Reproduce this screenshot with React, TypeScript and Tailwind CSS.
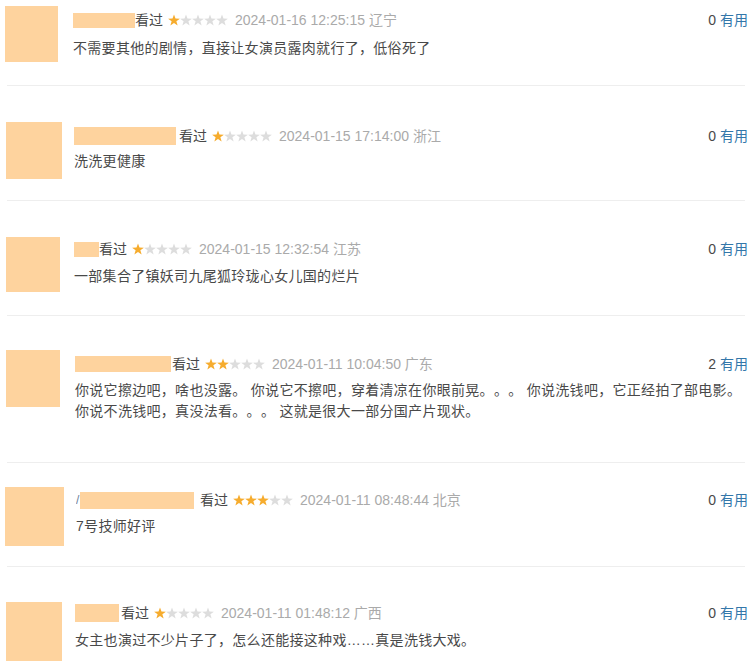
import React from 'react';

type Review = {
  wrap: string;
  avatar: string;
  body: string;
  bar: string;
  meta: string;
  comment: string;
  sep: string;
  lead?: boolean;
  stars: number;
  time: string;
  votes: number;
  text: string[];
};

const reviews: Review[] = [
  {
    wrap: 'pt-[6px] pl-[5px]',
    avatar: 'w-[53px] h-[56px]',
    body: 'ml-[15px]',
    bar: 'w-[62px] h-[15px] mr-0',
    meta: 'mt-[4px]',
    comment: 'mt-[8px]',
    sep: 'mt-[23px]',
    stars: 1,
    time: '2024-01-16 12:25:15 辽宁',
    votes: 0,
    text: ['不需要其他的剧情，直接让女演员露肉就行了，低俗死了'],
  },
  {
    wrap: 'pt-[36px] pl-[6px]',
    avatar: 'w-[56px] h-[57px]',
    body: 'ml-[12px]',
    bar: 'w-[102px] h-[18px] mr-[3px]',
    meta: 'mt-[4px]',
    comment: 'mt-[5px]',
    sep: 'mt-[21px]',
    stars: 1,
    time: '2024-01-15 17:14:00 浙江',
    votes: 0,
    text: ['洗洗更健康'],
  },
  {
    wrap: 'pt-[36px] pl-[6px]',
    avatar: 'w-[54px] h-[55px]',
    body: 'ml-[14px]',
    bar: 'w-[25px] h-[15px] mr-0',
    meta: 'mt-[2px]',
    comment: 'mt-[7px]',
    sep: 'mt-[23px]',
    stars: 1,
    time: '2024-01-15 12:32:54 江苏',
    votes: 0,
    text: ['一部集合了镇妖司九尾狐玲珑心女儿国的烂片'],
  },
  {
    wrap: 'pt-[34px] pl-[6px]',
    avatar: 'w-[54px] h-[57px]',
    body: 'ml-[15px]',
    bar: 'w-[96px] h-[16px] mr-[1px]',
    meta: 'mt-[4px]',
    comment: 'mt-[6px]',
    sep: 'mt-[40px]',
    stars: 2,
    time: '2024-01-11 10:04:50 广东',
    votes: 2,
    text: [
      '你说它擦边吧，啥也没露。 你说它不擦吧，穿着清凉在你眼前晃。。。 你说洗钱吧，它正经拍了部电影。',
      '你说不洗钱吧，真没法看。。。 这就是很大一部分国产片现状。',
    ],
  },
  {
    wrap: 'pt-[24px] pl-[5px]',
    avatar: 'w-[59px] h-[59px]',
    body: 'ml-[12px]',
    bar: 'w-[114px] h-[17px] mr-[6px]',
    meta: 'mt-[3px]',
    comment: 'mt-[6px]',
    sep: 'mt-[20px]',
    lead: true,
    stars: 3,
    time: '2024-01-11 08:48:44 北京',
    votes: 0,
    text: ['7号技师好评'],
  },
  {
    wrap: 'pt-[35px] pl-[6px]',
    avatar: 'w-[56px] h-[59px]',
    body: 'ml-[13px]',
    bar: 'w-[44px] h-[18px] mr-[2px]',
    meta: 'mt-[1px]',
    comment: 'mt-[7px]',
    sep: 'mt-[20px]',
    stars: 1,
    time: '2024-01-11 01:48:12 广西',
    votes: 0,
    text: ['女主也演过不少片子了，怎么还能接这种戏……真是洗钱大戏。'],
  },
];

const STAR =
  'M6 0.4 L7.47 4.58 L11.9 4.68 L8.38 7.37 L9.64 11.62 L6 9.1 L2.36 11.62 L3.62 7.37 L0.1 4.68 L4.53 4.58 Z';

function Stars({ n }: { n: number }) {
  return (
    <svg width="60" height="12" viewBox="0 0 60 12" className="shrink-0 block">
      {[0, 1, 2, 3, 4].map((i) => (
        <path
          key={i}
          d={STAR}
          transform={`translate(${i * 12} 0)`}
          fill={i < n ? '#f6ac2e' : '#dddddd'}
        />
      ))}
    </svg>
  );
}

function Item({ r, last }: { r: Review; last: boolean }) {
  return (
    <>
      <div className={`flex pr-[4px] ${r.wrap}`}>
        <div className={`shrink-0 bg-[#fed39e] ${r.avatar}`} />
        <div className={`flex-1 min-w-0 ${r.body}`}>
          <div className={`flex items-center h-[20px] text-[14px] ${r.meta}`}>
            {r.lead && (
              <span className="w-[4px] overflow-hidden text-[12px] text-[#6d7f9c] leading-none">/</span>
            )}
            <span className={`shrink-0 bg-[#fed39e] ${r.bar}`} />
            <span className="text-[#494949]">看过</span>
            <span className="ml-[5px]">
              <Stars n={r.stars} />
            </span>
            <span className="ml-[7px] text-[#aaaaaa]">{r.time}</span>
            <span className="ml-auto whitespace-nowrap">
              <span className="text-[#494949]">{r.votes}</span>
              <span className="text-[#3377aa]"> 有用</span>
            </span>
          </div>
          <div
            className={`text-[14px] leading-[21px] tracking-[0.3px] text-[#494949] whitespace-nowrap ${r.comment}`}
          >
            {r.text.map((t, i) => (
              <p key={i}>{t}</p>
            ))}
          </div>
        </div>
      </div>
      {!last && <div className={`mx-[7px] h-px bg-[#eeeeee] ${r.sep}`} />}
    </>
  );
}

export default function App() {
  return (
    <div
      className="w-[752px] h-[667px] overflow-hidden bg-white [text-spacing-trim:space-all]"
      style={{ fontFamily: '"Liberation Sans", "Noto Sans CJK SC", sans-serif' }}
    >
      {reviews.map((r, i) => (
        <Item key={i} r={r} last={i === reviews.length - 1} />
      ))}
    </div>
  );
}
